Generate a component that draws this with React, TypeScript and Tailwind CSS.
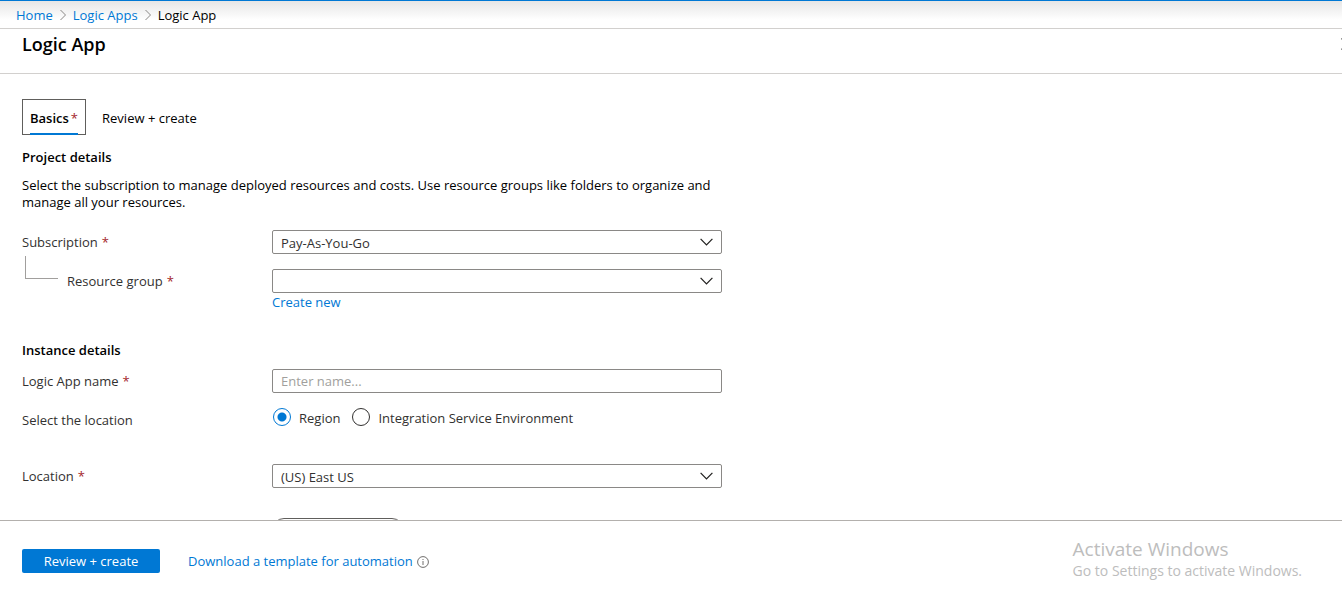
import React, { useState } from "react";

interface SelectFieldProps {
  id: string;
  value: string;
}

function Required() {
  return <span className="text-[#a4262c]">*</span>;
}

function CrumbArrow() {
  return (
    <svg className="w-2 h-3 shrink-0" viewBox="0 0 8 12" fill="none" stroke="#8a8886" aria-hidden="true">
      <path d="M1.5 1 6.5 6 1.5 11" />
    </svg>
  );
}

function SelectField({ id, value }: SelectFieldProps) {
  return (
    <div className="relative w-full max-w-[450px]">
      <select
        id={id}
        defaultValue={value}
        className="block w-full h-6 appearance-none rounded-xs border border-[#8a8886] bg-white pl-2 pr-8 pt-px text-[13px] text-[#323130]"
      >
        <option value={value}>{value}</option>
      </select>
      <svg
        className="pointer-events-none absolute right-2 top-2 w-[14px] h-2"
        viewBox="0 0 14 8"
        fill="none"
        stroke="#201f1e"
        strokeWidth="1.2"
        aria-hidden="true"
      >
        <path d="M.6.8 6.5 7 12.4.8" />
      </svg>
    </div>
  );
}

interface RadioOptionProps {
  label: string;
  checked: boolean;
  onChange: () => void;
}

function RadioOption({ label, checked, onChange }: RadioOptionProps) {
  return (
    <label className="flex items-start gap-2 text-[#323130]">
      <input
        type="radio"
        name="location-type"
        checked={checked}
        onChange={onChange}
        className="w-[18px] h-[18px] shrink-0 appearance-none rounded-full border border-[#323130] bg-white checked:border-[#0078d4] checked:bg-[radial-gradient(circle,#0078d4_4px,transparent_5px)]"
      />
      <span className="pt-px">{label}</span>
    </label>
  );
}

const LABEL = "flex items-center gap-1 w-[250px] h-6 shrink-0 text-[#323130]";

export default function App() {
  const [locationType, setLocationType] = useState("region");

  return (
    <div className="flex flex-col h-screen overflow-hidden bg-white font-['Open_Sans','Segoe_UI',sans-serif] text-[13px] leading-[18px] text-black">
      {/* Breadcrumb */}
      <nav
        aria-label="Breadcrumb"
        className="flex items-center gap-[6px] h-[29px] shrink-0 px-4 pt-px border-t border-t-[#0078d4] border-b border-b-[#d2d0ce] bg-linear-to-b from-[#e6e6e6] to-white to-70%"
      >
        <a href="#home" className="text-[#0078d4]">Home</a>
        <CrumbArrow />
        <a href="#logic-apps" className="text-[#0078d4]">Logic Apps</a>
        <CrumbArrow />
        <span>Logic App</span>
      </nav>

      {/* Title bar */}
      <header className="flex items-start justify-between h-[45px] shrink-0 pl-[22px] pt-1 border-b border-[#d2d0ce]">
        <h1 className="text-[18px] leading-[22px] font-semibold">Logic App</h1>
        <button type="button" aria-label="Close" className="-mr-[11px] mt-[5px] shrink-0">
          <svg className="w-3 h-3" viewBox="0 0 12 12" fill="none" stroke="#323130" strokeWidth="1.2">
            <path d="M.5.5l11 11M11.5.5l-11 11" />
          </svg>
        </button>
      </header>

      <main className="flex-1 min-h-0 overflow-hidden px-[22px] pt-[25px]">
        <div role="tablist" className="flex items-stretch gap-4 h-9">
          <button
            type="button"
            role="tab"
            aria-selected="true"
            className="flex items-stretch border border-[#605e5c] px-[7px]"
          >
            <span className="-mb-px flex items-center gap-[2px] border-b-2 border-[#0078d4] pt-[3px] font-semibold">
              Basics
              <span className="font-normal text-[#a4262c]">*</span>
            </span>
          </button>
          <button type="button" role="tab" aria-selected="false" className="pt-[2px]">
            Review + create
          </button>
        </div>

        <h2 className="mt-[13px] font-semibold">Project details</h2>
        <p className="mt-[11px] max-w-[700px] leading-[17px]">
          Select the subscription to manage deployed resources and costs. Use resource groups like folders to organize and
          manage all your resources.
        </p>

        <div className="mt-[19px] flex">
          <label htmlFor="subscription" className={LABEL}>
            Subscription <Required />
          </label>
          <SelectField id="subscription" value="Pay-As-You-Go" />
        </div>

        <div className="mt-[15px] flex">
          <div className="flex items-start w-[250px] shrink-0">
            <span className="-mt-[13px] ml-[3px] mr-[9px] w-[33px] h-[23px] border-l border-b border-[#a19f9d]" />
            <label htmlFor="resource-group" className="flex items-center gap-1 h-6 text-[#323130]">
              Resource group <Required />
            </label>
          </div>
          <div className="flex-1 min-w-0">
            <SelectField id="resource-group" value="" />
            <a href="#create-new" className="block w-fit text-[#0078d4]">Create new</a>
          </div>
        </div>

        <h2 className="mt-[30px] font-semibold">Instance details</h2>
        <div className="mt-[10px] flex">
          <label htmlFor="app-name" className={LABEL}>
            Logic App name <Required />
          </label>
          <input
            id="app-name"
            type="text"
            placeholder="Enter name..."
            className="w-full max-w-[450px] h-6 rounded-xs border border-[#8a8886] px-2 text-[13px] text-[#323130] placeholder:text-[#a19f9d]"
          />
        </div>

        <div role="radiogroup" aria-labelledby="location-type-label" className="mt-[15px] flex items-start">
          <span id="location-type-label" className={LABEL}>Select the location</span>
          <div className="flex gap-3 pl-px">
            <RadioOption label="Region" checked={locationType === "region"} onChange={() => setLocationType("region")} />
            <RadioOption
              label="Integration Service Environment"
              checked={locationType === "ise"}
              onChange={() => setLocationType("ise")}
            />
          </div>
        </div>

        <div className="mt-8 flex">
          <label htmlFor="location" className={LABEL}>
            Location <Required />
          </label>
          <SelectField id="location" value="(US) East US" />
        </div>

        {/* Log Analytics toggle, continues below the fold */}
        <div className="mt-[30px] pl-[250px]">
          <button
            type="button"
            aria-label="Log Analytics"
            className="block w-[132px] h-6 rounded-full border border-[#605e5c]"
          />
        </div>
      </main>

      {/* Action bar */}
      <footer className="flex items-start h-[75px] shrink-0 pl-[22px] pr-10 border-t border-[#b3b0ad]">
        <button type="button" className="mt-7 w-[138px] h-6 rounded-xs bg-[#0078d4] text-white">
          Review + create
        </button>
        <a href="#template" className="mt-7 ml-7 flex items-center gap-1 h-6 text-[#0078d4]">
          Download a template for automation
          <svg className="w-3 h-3 mt-px" viewBox="0 0 12 12" fill="none" stroke="#605e5c" aria-hidden="true">
            <circle cx="6" cy="6" r="5.4" strokeWidth=".9" />
            <path d="M6 5v4M6 3v1" strokeWidth=".9" />
          </svg>
        </a>
        <div className="ml-auto mt-4 text-[#bdbdbd]">
          <p className="text-[19px] leading-6">Activate Windows</p>
          <p className="text-[14px] leading-5">Go to Settings to activate Windows.</p>
        </div>
      </footer>
    </div>
  );
}
